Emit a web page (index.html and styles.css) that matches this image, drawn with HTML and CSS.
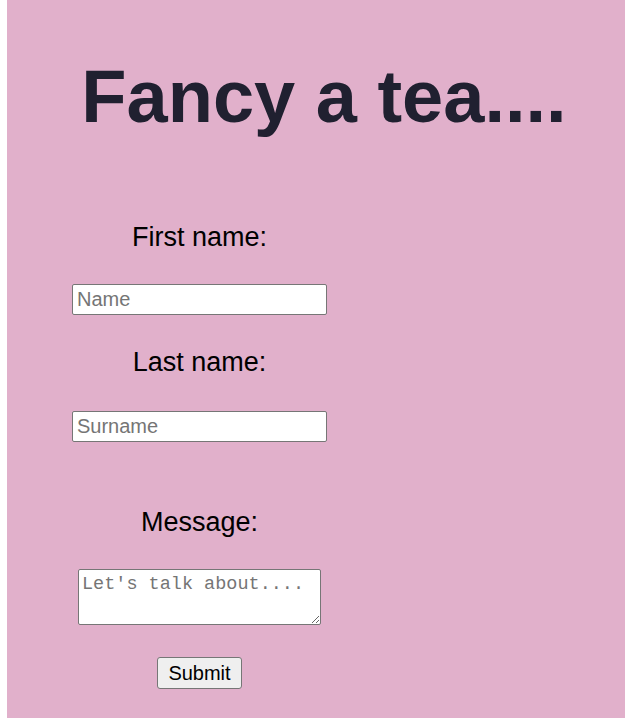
FILE: index.html
```html
<!DOCTYPE html>
<html lang="en">
<head>
<meta charset="utf-8">
<title>Fancy a tea....</title>
<link rel="stylesheet" href="styles.css">
</head>
<body>
<main class="page">
  <h1 class="title">Fancy a tea....</h1>
  <form class="form">
    <label class="label" for="fname">First name:</label>
    <input class="field" id="fname" type="text" placeholder="Name">
    <label class="label" for="lname">Last name:</label>
    <input class="field field-last" id="lname" type="text" placeholder="Surname">
    <label class="label label-message" for="msg">Message:</label>
    <textarea class="message" id="msg" placeholder="Let's talk about...."></textarea>
    <button class="submit" type="submit">Submit</button>
  </form>
</main>
</body>
</html>
```
FILE: styles.css
```css
html, body {
  margin: 0;
  padding: 0;
  background: #ffffff;
}

body {
  font-family: "Liberation Sans", Arial, sans-serif;
  overflow: hidden;
}

.page {
  margin-left: 7px;
  min-height: 718px;
  background: #e1b0cb;
  padding-top: 53px;
  box-sizing: border-box;
}

.title {
  margin: 0;
  padding-left: 16px;
  text-align: center;
  font-family: "Liberation Sans", Arial, sans-serif;
  font-weight: bold;
  font-size: 74px;
  line-height: 88px;
  color: #202030;
}

.form {
  width: 385px;
  margin-top: 81px;
  display: flex;
  flex-direction: column;
  align-items: center;
  gap: 32px;
}

.label {
  font-size: 27px;
  line-height: 30px;
  color: #000000;
}

.label-message {
  margin-top: 33px;
}

.field {
  box-sizing: border-box;
  width: 255px;
  height: 31px;
  padding: 0 4px;
  border: 1px solid #767676;
  border-radius: 2px;
  background: #ffffff;
  font-family: "Liberation Sans", Arial, sans-serif;
  font-size: 20px;
  color: #000000;
}

.field-last {
  margin-top: 2px;
}

.field::placeholder {
  color: #757575;
}

.message {
  box-sizing: border-box;
  width: 243px;
  height: 56px;
  padding: 5px 3px 3px;
  border: 1px solid #767676;
  border-radius: 2px;
  background: #ffffff;
  font-family: "Liberation Mono", "DejaVu Sans Mono", monospace;
  font-size: 18.5px;
  line-height: 20px;
}

.message::placeholder {
  color: #757575;
}

.submit {
  box-sizing: border-box;
  width: 85px;
  height: 32px;
  padding: 0;
  border: 1px solid #767676;
  border-radius: 3px;
  background: #efefef;
  font-family: "Liberation Sans", Arial, sans-serif;
  font-size: 20px;
  color: #000000;
}
```
